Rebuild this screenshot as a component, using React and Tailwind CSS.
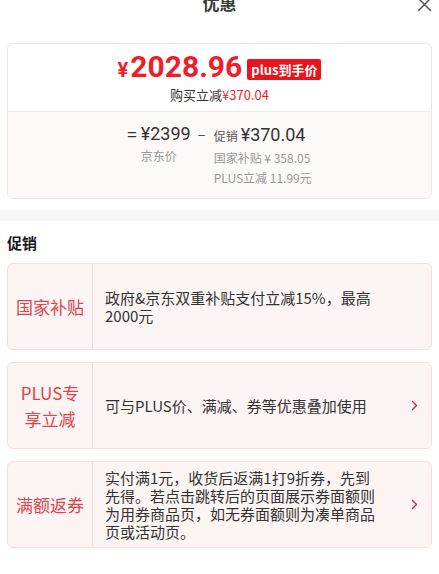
const CN = { fontFamily: '"Noto Sans CJK SC", "Noto Sans", sans-serif' }
const NUM = { fontFamily: 'Roboto, "Noto Sans CJK SC", sans-serif' }

function Chevron() {
  return (
    <svg width="7" height="11" viewBox="0 0 7 11" className="ml-auto mr-[13px] shrink-0">
      <polyline points="1.5,1.5 5.5,5.5 1.5,9.5" fill="none" stroke="#b4333d" strokeWidth="1.4" strokeLinecap="round" strokeLinejoin="round" />
    </svg>
  )
}

function PromoCard({ label, text, arrow }) {
  return (
    <div className="flex min-h-[87px] border border-[#f3dfdf] bg-[#fdf4f4] rounded-[6px]">
      <div className="w-[85px] shrink-0 border-r border-[#f0dcdc] flex items-center justify-center text-center text-[17px] leading-[26px] text-[#e0434b]">
        {label}
      </div>
      <div className="flex-1 flex items-center">
        <div className="w-[276px] ml-[12px] py-[6px] text-[15px] leading-[18px] text-[#333]">{text}</div>
        {arrow && <Chevron />}
      </div>
    </div>
  )
}

export default function App() {
  return (
    <div className="w-[439px] h-[574px] bg-white overflow-hidden" style={CN}>
      <div className="relative h-[43px]">
        <div className="-translate-y-[7px] text-center text-[17px] leading-[20px] font-bold text-[#3a3a3a]">优惠</div>
        <svg width="15" height="15" viewBox="0 0 15 15" className="absolute right-[7px] -top-[3px]">
          <path d="M1.5 1.5 L13.5 13.5 M13.5 1.5 L1.5 13.5" stroke="#555" strokeWidth="1.5" strokeLinecap="round" />
        </svg>
      </div>

      <div className="mx-[7px] border border-[#e8e8e8] rounded-[6px] overflow-hidden">
        <div className="h-[67px] pt-[8px]">
          <div className="flex items-center justify-center h-[34px]">
            <span className="text-[#f21d2b] font-bold leading-[34px]" style={NUM}>
              <span className="text-[20px] mr-[2px]">¥</span>
              <span className="text-[30px]">2028.96</span>
            </span>
            <span className="ml-[5px] h-[21px] px-[4px] bg-[#e8141e] text-white text-[13px] font-bold leading-[21px] rounded-[2px]">plus到手价</span>
          </div>
          <div className="text-center text-[13px] leading-[18px] text-[#333]">
            购买立减<span className="text-[#f21d2b]">¥370.04</span>
          </div>
        </div>
        <div className="bg-[#fdf9f8] border-t border-[#f1e9e7] pt-[10px] pb-[10px] flex justify-center items-start text-[#333]">
          <span className="text-[17px] leading-[24px]">=</span>
          <div className="ml-[4px] flex flex-col">
            <span className="text-[18px] leading-[24px]" style={NUM}>¥2399</span>
            <span className="text-[12px] leading-[20px] text-[#999]">京东价</span>
          </div>
          <span className="ml-[7px] text-[15px] leading-[24px] text-[#555]">–</span>
          <div className="ml-[8px] flex flex-col">
            <span className="leading-[24px]">
              <span className="text-[12px] text-[#555]">促销</span>
              <span className="ml-[3px] text-[18px]" style={NUM}>¥370.04</span>
            </span>
            <span className="text-[12px] leading-[20px] text-[#999]">国家补贴 ¥ 358.05</span>
            <span className="text-[12px] leading-[20px] text-[#999]">PLUS立减 11.99元</span>
          </div>
        </div>
      </div>

      <div className="mt-[11px] h-[11px] bg-[#f7f7fa]" />

      <div className="mt-[12px] px-[7px] text-[15px] leading-[20px] font-bold text-[#1a1a1a]">促销</div>

      <div className="mt-[10px] px-[7px] flex flex-col gap-[12px]">
        <PromoCard label="国家补贴" text="政府&京东双重补贴支付立减15%，最高2000元" />
        <PromoCard label={<>PLUS专<br />享立减</>} text="可与PLUS价、满减、券等优惠叠加使用" arrow />
        <PromoCard
          label="满额返券"
          text="实付满1元，收货后返满1打9折券，先到先得。若点击跳转后的页面展示券面额则为用券商品页，如无券面额则为凑单商品页或活动页。"
          arrow
        />
      </div>
    </div>
  )
}
